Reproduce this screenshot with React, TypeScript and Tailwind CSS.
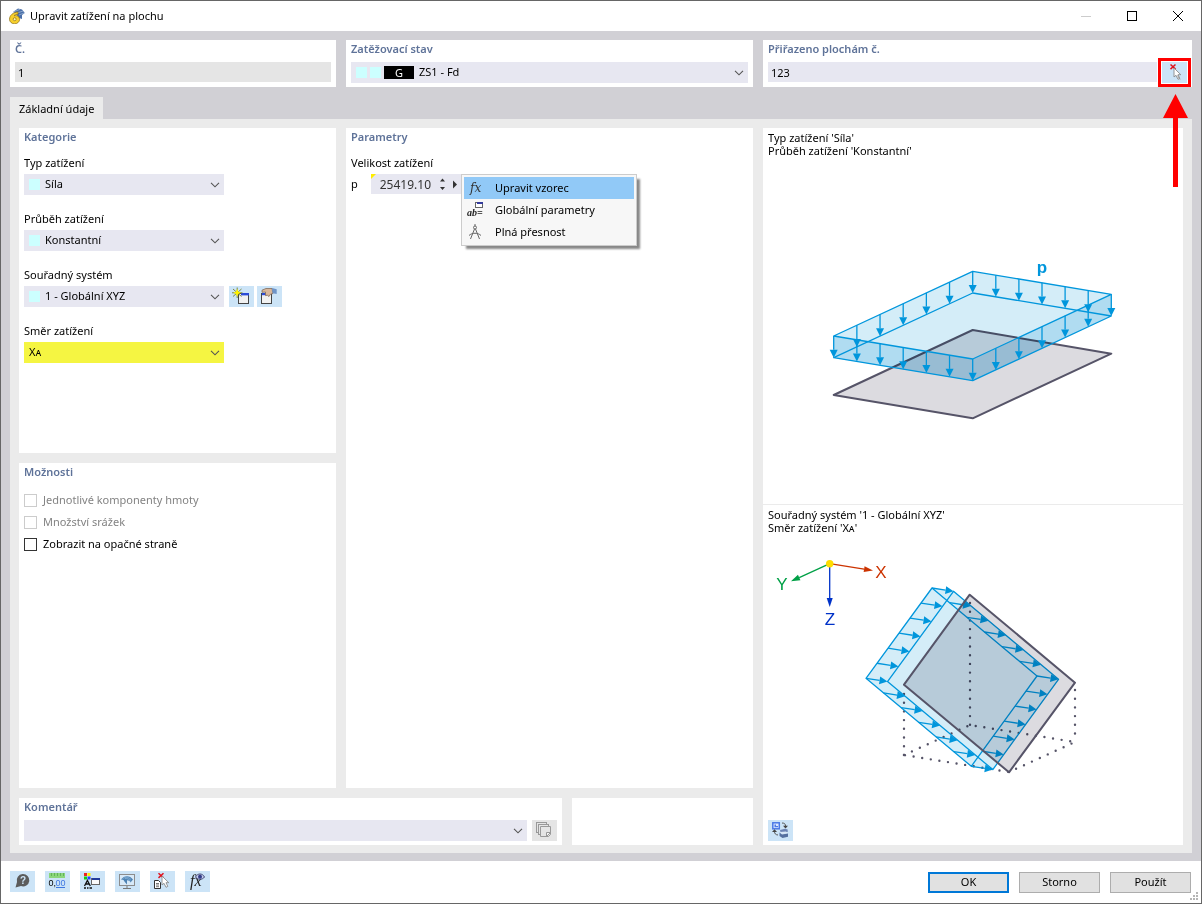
import type { ReactNode, SelectHTMLAttributes } from "react";
import { useId } from "react";
import { clsx } from "clsx";

type Point = [number, number];

const toPoints = (points: Point[]) => points.map((p) => p.join(",")).join(" ");

const lerp = (a: Point, b: Point, t: number): Point => [a[0] + (b[0] - a[0]) * t, a[1] + (b[1] - a[1]) * t];

const shift = (p: Point, d: Point): Point => [p[0] + d[0], p[1] + d[1]];

interface ArrowProps {
    from: Point;
    to: Point;
    color?: string;
    head?: number;
    spread?: number;
}

const Arrow = ({ from, to, color = "#0096dc", head = 8, spread = 4 }: ArrowProps) => {
    const length = Math.hypot(to[0] - from[0], to[1] - from[1]);
    const ux = (to[0] - from[0]) / length;
    const uy = (to[1] - from[1]) / length;
    const base: Point = [to[0] - ux * head, to[1] - uy * head];

    return (
        <g stroke={color} fill={color}>
            <line x1={from[0]} y1={from[1]} x2={base[0]} y2={base[1]} strokeWidth="1.3" />
            <polygon
                stroke="none"
                points={toPoints([to, [base[0] - uy * spread, base[1] + ux * spread], [base[0] + uy * spread, base[1] - ux * spread]])}
            />
        </g>
    );
};

/* Load arrows spread evenly along every edge of a quad */
const EdgeArrows = ({ corners, offset }: { corners: Point[]; offset: Point }) => (
    <>
        {corners.flatMap((corner, i) =>
            [0, 1, 2, 3, 4, 5].map((step) => {
                const from = lerp(corner, corners[(i + 1) % corners.length], step / 6);
                return <Arrow key={`${i}-${step}`} from={from} to={shift(from, offset)} />;
            }),
        )}
    </>
);

const ForceDiagram = () => {
    const top: Point[] = [[209.7, 113.3], [348.3, 136.3], [209.7, 201], [70.7, 178]];
    const drop: Point = [0, 21.7];
    const [a, b, c, d] = top;
    const [a2, b2, c2, d2] = top.map((p) => shift(p, drop));

    return (
        <svg viewBox="0 0 420 346" className="block w-full" role="img" aria-label="Konstantní zatížení plochy">
            <polygon points="209.7,172 348.3,195.7 209.7,260.3 70.7,237" fill="#dcdbe0" stroke="#565468" strokeWidth="2" strokeLinejoin="round" />
            <g fill="#d4edf8" className="mix-blend-multiply">
                <polygon points={toPoints([a, b, b2, c2, d2, d])} />
            </g>
            <g fill="#d4edf8" className="mix-blend-multiply">
                <polygon points={toPoints([d, c, b, b2, c2, d2])} />
            </g>
            <g fill="none" stroke="#0096dc" strokeWidth="1.3" strokeLinejoin="round">
                <polygon points={toPoints(top)} />
                <polygon points={toPoints([a2, b2, c2, d2])} />
            </g>
            <EdgeArrows corners={top} offset={drop} />
            <text x="279" y="115" textAnchor="middle" className="fill-[#0096dc] font-['Liberation_Sans',sans-serif] text-[17px] font-bold">
                p
            </text>
        </svg>
    );
};

const DirectionDiagram = () => {
    const outer: Point[] = [[169, 53], [274, 141], [208.3, 231.3], [103, 143.3]];
    const push: Point = [21.5, 3.3];
    const inner = outer.map((p) => shift(p, push));
    const origin: Point = [66.7, 28.7];

    return (
        <svg viewBox="0 0 420 285" className="block w-full" role="img" aria-label="Směr zatížení v globálních osách">
            <g fill="none" stroke="#565468" strokeWidth="2.4" strokeLinecap="round" strokeDasharray="0 8.7">
                <path d="M207 68V190" />
                <path d="M141 159V220" />
                <path d="M312 155V207" />
                <path d="M141 220L207 190L312 207L246 237Z" />
            </g>
            <g className="mix-blend-multiply">
                <polygon fill="#d4edf8" points={toPoints([outer[0], inner[0], inner[1], inner[2], outer[2], outer[3]])} />
            </g>
            <g fill="none" stroke="#0096dc" strokeWidth="1.3" strokeLinejoin="round">
                <polygon points={toPoints(outer)} />
                <polygon points={toPoints(inner)} />
            </g>
            <EdgeArrows corners={outer} offset={push} />
            <g className="mix-blend-multiply">
                <polygon points="206.7,59.7 312,147.7 246,237.3 141,149.7" fill="#dcdbe0" />
            </g>
            <polygon points="206.7,59.7 312,147.7 246,237.3 141,149.7" fill="none" stroke="#565468" strokeWidth="2" strokeLinejoin="round" />
            <Arrow from={origin} to={[110, 35.5]} color="#cc3300" head={9} spread={3} />
            <Arrow from={origin} to={[28, 46.3]} color="#00a046" head={9} spread={3} />
            <Arrow from={origin} to={[66.7, 72]} color="#0032c8" head={9} spread={3} />
            <circle cx={origin[0]} cy={origin[1]} r="3.7" fill="#fd0" />
            <g textAnchor="middle" className="font-['Liberation_Sans',sans-serif] text-[17px]">
                <text x="118" y="43" fill="#cc3300">X</text>
                <text x="19" y="55" fill="#00a046">Y</text>
                <text x="67" y="90" fill="#0032c8">Z</text>
            </g>
        </svg>
    );
};

const Icon = ({ children }: { children: ReactNode }) => (
    <svg viewBox="0 0 25 21" className="block h-[21px] w-[25px]" aria-hidden="true">
        {children}
    </svg>
);

const Cursor = ({ x, y }: { x: number; y: number }) => (
    <path
        transform={`translate(${x} ${y})`}
        d="M0 0V9L2 7.3L4 11.3L5.8 10.4L4 6.7H6.8Z"
        fill="#fff"
        stroke="#8a8a8a"
        strokeWidth="0.9"
    />
);

const RedCross = ({ x, y }: { x: number; y: number }) => (
    <path transform={`translate(${x} ${y})`} d="M0 0L5 4.6M5 0L0 4.6" stroke="#e0141e" strokeWidth="1.5" />
);

const PickIcon = () => (
    <Icon>
        <RedCross x={8.5} y={2.5} />
        <Cursor x={12} y={6} />
        <path d="M15.5 13.5L18 17.5" stroke="#9a9a9a" />
    </Icon>
);

const NewIcon = () => (
    <Icon>
        <rect x="9.5" y="7.5" width="10" height="10" fill="#f1f1f1" stroke="#444" />
        <rect x="12" y="7" width="8" height="2.4" fill="#2b4bd8" />
        <path d="M4 3L12.5 10.5M12.5 3L4 10.5M8.2 1.5V12M3 6.8H13.5" stroke="#6f7d33" strokeWidth="0.9" />
        <path d="M8.2 2.8L9.3 5.5L12 6.8L9.3 8L8.2 10.8L7 8L4.4 6.8L7 5.5Z" fill="#fff200" />
    </Icon>
);

const EditIcon = () => (
    <Icon>
        <rect x="4.5" y="7.5" width="10" height="10" fill="#f1f1f1" stroke="#444" />
        <rect x="5" y="7" width="5" height="2.2" fill="#2b4bd8" />
        <path d="M5 4.2L9 2.5H15L16 7.5L13.5 8.2L12 10.5L10.3 9.2L8.5 9.6L8.5 6L5 6.3Z" fill="#d9b79a" stroke="#826b5a" strokeWidth="0.8" />
        <path d="M15 2L19.7 3.2V8L15.6 7.2Z" fill="#6d93c7" />
    </Icon>
);

const CopyIcon = () => (
    <Icon>
        <g fill="#e5e5e5" stroke="#999">
            <rect x="4.5" y="2.5" width="10" height="10" />
            <rect x="6.5" y="4.5" width="10" height="10" />
            <path d="M8.5 6.5H18.5V14.5L16.5 16.5H8.5Z" />
            <path d="M14.5 16V12.5H18.5L15 16Z" fill="#f7f7f7" />
        </g>
    </Icon>
);

const SwitchViewIcon = () => (
    <Icon>
        <rect x="4.8" y="2.8" width="6.5" height="6" fill="#dbe8ff" stroke="#4b7ae6" strokeWidth="1.5" />
        <path d="M6.5 4.5V7.3H10V6H8V4.5Z" fill="#4b7ae6" />
        <path d="M14 3C16.5 3 17.5 4 17.5 6" fill="none" stroke="#555" />
        <path d="M15 5.8H20L17.5 8.5Z" fill="#444" />
        <path d="M10 15C7.5 14.8 6.5 13.5 6.5 11.5" fill="none" stroke="#555" />
        <path d="M4 12H9L6.5 9.3Z" fill="#444" />
        <path d="M12 10L17 8.7L19.7 9.5V12H12.5Z" fill="#6d84b5" />
        <path d="M11.5 12.5V16L14.5 18L20 16.7V13.5L14 14.5Z" fill="#56709f" />
        <path d="M12 12L18 11.5L19.7 13L14 14Z" fill="#d9e6f5" />
    </Icon>
);

const HelpIcon = () => (
    <Icon>
        <path d="M5.5 16.5L7 11A6.3 6.2 0 1 1 11 15.1Z" fill="#5c5c5c" />
        <text x="13" y="13" textAnchor="middle" className="fill-[#cce4f7] font-['Liberation_Sans',sans-serif] text-[10px] font-bold">
            ?
        </text>
    </Icon>
);

const UnitsIcon = () => (
    <Icon>
        <rect x="4" y="2" width="16" height="5" fill="#8bd67c" />
        <path d="M6.5 2V5M9.5 2V5M12.5 2V5M15.5 2V5M18.5 2V5" stroke="#58a950" strokeWidth="0.8" />
        <g className="font-['Liberation_Sans',sans-serif] text-[9px]">
            <text x="3.5" y="15" fill="#000">0,</text>
            <text x="10.5" y="15" fill="#3f78e0">00</text>
        </g>
        <path d="M11 16.5H20" stroke="#3f78e0" />
    </Icon>
);

const DisplayIcon = () => (
    <Icon>
        <rect x="4" y="2" width="3" height="3" fill="#e22" />
        <rect x="7.5" y="2" width="3" height="3" fill="#fe0" />
        <rect x="4" y="5.5" width="3" height="3" fill="#1c1" />
        <rect x="7.5" y="5.5" width="3" height="3" fill="#24f" />
        <path d="M4.5 15L7.4 9.5L10.3 15M5.5 13H9.3M4 17H6M7 17H8.5M9.5 17H12" stroke="#111" strokeWidth="1.3" fill="none" />
        <rect x="11.5" y="7.5" width="8" height="6" fill="#fafafa" stroke="#666" />
        <rect x="12" y="7" width="8" height="2" fill="#223a9c" />
    </Icon>
);

const MonitorIcon = () => (
    <Icon>
        <rect x="4.5" y="3.5" width="15" height="11" fill="#d7e9f8" stroke="#8c8c8c" />
        <path d="M12 15V17M8 17.5H16" stroke="#777" />
        <path d="M6 8.5C9 4 15 4 18 8.5L15.5 11.5C15 10 14 9.2 12 9.2V13.5L9.8 11L8.5 9Z" fill="#4e83b4" />
        <path d="M7.5 8C10 5.8 13 5.5 16 8.5M10 7.5C12.5 7 14 8.5 15.5 10" fill="none" stroke="#9cc5e4" strokeWidth="0.6" />
    </Icon>
);

const PickListIcon = () => (
    <Icon>
        <path d="M4.5 9.5H8.5L10.5 11.5V17.5H4.5Z" fill="#fff" stroke="#333" />
        <path d="M6 12.5H9M6 14H9M6 15.7H9" stroke="#555" strokeWidth="0.8" />
        <RedCross x={8.5} y={2.3} />
        <Cursor x={12} y={5} />
    </Icon>
);

const FormulaViewIcon = () => (
    <Icon>
        <text x="5" y="15" className="fill-[#222] font-['Liberation_Serif',serif] text-[16px] italic">
            fx
        </text>
        <path d="M10.5 6C12.5 2 17.5 2 19.5 6C17.5 9 12.5 9 10.5 6Z" fill="#c7cfee" stroke="#333866" strokeWidth="0.9" />
        <circle cx="15" cy="5.7" r="2" fill="#333b88" />
    </Icon>
);

const FormulaIcon = () => (
    <Icon>
        <text x="6" y="14" className="fill-[#333] font-['DejaVu_Serif',serif] text-[12px] italic">
            fx
        </text>
    </Icon>
);

const GlobalParametersIcon = () => (
    <Icon>
        <rect x="11.5" y="2.5" width="7" height="5" fill="#fff" stroke="#666" />
        <rect x="13" y="2" width="6" height="2" fill="#333a9c" />
        <text x="3" y="16" className="fill-[#222] font-['Liberation_Serif',serif] text-[10px] font-bold italic">
            ab=
        </text>
    </Icon>
);

const PrecisionIcon = () => (
    <Icon>
        <g fill="none" stroke="#666">
            <circle cx="11" cy="5.5" r="1.5" />
            <path d="M11 2V4M10.5 7L6.5 17M11.5 7L15.5 17M5 13.5C8 10.5 14 10.5 17 13.5" />
        </g>
    </Icon>
);

const AppIcon = () => (
    <svg viewBox="0 0 16 16" className="size-4" aria-hidden="true">
        <path d="M4 4L9 0.5L13 1.5L15.8 5L13 7V11L10 10L6 5Z" fill="#4a6fa8" />
        <path d="M5 3.6L11 1.4M8 5L14 3M10 7L15 5" stroke="#a6bedc" strokeWidth="0.7" />
        <path d="M9 4C4 4.2 0.5 7.5 0.5 11.3A4.8 4.3 0 0 0 10.6 11.3C10.6 8.4 7.3 7 5 7.8C5.7 6.9 7.2 6.3 9 6.2Z" fill="#f7d02c" stroke="#8a6c12" strokeWidth="0.7" />
        <circle cx="5.7" cy="11.2" r="1.5" fill="#fff3b0" stroke="#8a6c12" strokeWidth="0.7" />
    </svg>
);

const Heading = ({ children }: { children: ReactNode }) => <h2 className="h-[22px] leading-[18px] font-semibold text-[#5f7399]">{children}</h2>;

const Panel = ({ title, className, children }: { title?: ReactNode; className?: string; children?: ReactNode }) => (
    <section className={clsx("bg-white px-[5px] pb-1", className)}>
        {title && <Heading>{title}</Heading>}
        {children}
    </section>
);

const Swatch = () => <span className="size-[11px] bg-[#ccffff]" />;

interface SelectProps extends SelectHTMLAttributes<HTMLSelectElement> {
    option: string;
    prefix?: ReactNode;
    highlighted?: boolean;
    wrapperClassName?: string;
}

const Select = ({ option, prefix, highlighted, wrapperClassName, className, ...props }: SelectProps) => (
    <div className={clsx("relative h-[21px]", wrapperClassName)}>
        <select className={clsx("block size-full appearance-none pr-6 outline-none", highlighted ? "bg-[#f5f542]" : "bg-[#e7e7f1]", className)} {...props}>
            <option>{option}</option>
        </select>
        {prefix && <span className="pointer-events-none absolute inset-y-0 left-[5px] flex items-center gap-[3px]">{prefix}</span>}
        <svg viewBox="0 0 10 6" className="pointer-events-none absolute top-2 right-1 h-[6px] w-[10px]" aria-hidden="true">
            <path d="M1 0.8L5 4.8L9 0.8" fill="none" stroke="#555" strokeWidth="1.1" />
        </svg>
    </div>
);

interface FieldProps {
    label: string;
    option: string;
    swatch?: boolean;
    highlighted?: boolean;
    children?: ReactNode;
}

const Field = ({ label, option, swatch = true, highlighted, children }: FieldProps) => {
    const id = useId();

    return (
        <div>
            <label htmlFor={id} className="mb-0.5 block leading-[18px]">
                {label}
            </label>
            <div className="flex">
                <Select
                    id={id}
                    option={option}
                    highlighted={highlighted}
                    prefix={swatch && <Swatch />}
                    wrapperClassName="w-[200px]"
                    className={swatch ? "pl-[21px]" : "pl-[5px]"}
                />
                {children}
            </div>
        </div>
    );
};

const IconButton = ({ label, disabled, className, children }: { label: string; disabled?: boolean; className?: string; children: ReactNode }) => (
    <button type="button" aria-label={label} disabled={disabled} className={clsx("shrink-0", disabled ? "bg-[#e5e5e5]" : "bg-[#cce4f7]", className)}>
        {children}
    </button>
);

const CheckOption = ({ label, disabled }: { label: string; disabled?: boolean }) => (
    <label className={clsx("flex h-[22px] items-center gap-1.5", disabled && "text-[#838383]")}>
        <input type="checkbox" disabled={disabled} className={clsx("size-[13px] appearance-none border bg-white", disabled ? "border-[#ccc]" : "border-[#333]")} />
        {label}
    </label>
);

const MenuItem = ({ icon, active, children }: { icon: ReactNode; active?: boolean; children: ReactNode }) => (
    <button type="button" role="menuitem" className={clsx("flex h-[22px] w-full items-center gap-1.5 text-left", active && "bg-[#91c9f7]")}>
        {icon}
        {children}
    </button>
);

const DialogButton = ({ primary, children }: { primary?: boolean; children: ReactNode }) => (
    <button type="button" className={clsx("h-[21px] w-[81px] bg-[#e1e1e1]", primary ? "border-2 border-[#0078d7]" : "border border-[#adadad]")}>
        {children}
    </button>
);

const tools = [
    { label: "Nápověda", icon: <HelpIcon /> },
    { label: "Jednotky", icon: <UnitsIcon /> },
    { label: "Zobrazení", icon: <DisplayIcon /> },
    { label: "Náhled", icon: <MonitorIcon /> },
    { label: "Vybrat", icon: <PickListIcon /> },
    { label: "Vzorce", icon: <FormulaViewIcon /> },
];

const TitleBar = () => (
    <header className="flex h-[30px] items-center bg-white pl-2">
        <AppIcon />
        <h1 className="ml-[5px] flex-1">Upravit zatížení na plochu</h1>
        <div className="flex *:flex *:h-[30px] *:w-[46px] *:items-center *:justify-center">
            <button type="button" aria-label="Minimalizovat" disabled>
                <span className="h-px w-[10px] bg-[#ccc]" />
            </button>
            <button type="button" aria-label="Maximalizovat">
                <span className="size-[10px] border border-black" />
            </button>
            <button type="button" aria-label="Zavřít">
                <svg viewBox="0 0 10 10" className="size-[10px]" stroke="#000">
                    <path d="M0 0L10 10M10 0L0 10" />
                </svg>
            </button>
        </div>
    </header>
);

const Summary = () => (
    <div className="grid grid-cols-[326fr_407fr_429fr] gap-[10px]">
        <Panel title={<label htmlFor="number">Č.</label>}>
            <input id="number" readOnly defaultValue="1" className="block h-5 w-full bg-[#e5e5e5] pl-[3px] outline-none" />
        </Panel>
        <Panel title={<label htmlFor="load-case">Zatěžovací stav</label>}>
            <Select
                id="load-case"
                option="ZS1 - Fd"
                className="pl-[68px]"
                prefix={
                    <>
                        <Swatch />
                        <Swatch />
                        <span className="h-[13px] w-[30px] bg-black text-center leading-[13px] text-white">G</span>
                    </>
                }
            />
        </Panel>
        <Panel title={<label htmlFor="surfaces">Přiřazeno plochám č.</label>}>
            <div className="flex items-start gap-[5px]">
                <input id="surfaces" defaultValue="123" className="h-5 min-w-0 flex-1 bg-[#e7e7f1] pl-[3px] outline-none" />
                <div className="relative">
                    <IconButton label="Vybrat plochy" className="block">
                        <PickIcon />
                    </IconButton>
                    {/* Callout frame and arrow over the pick button */}
                    <span className="pointer-events-none absolute -inset-1 border-[3px] border-[#f00]" />
                    <svg viewBox="0 0 25 93" className="pointer-events-none absolute top-8 left-px z-10 h-[93px] w-[25px]" aria-hidden="true">
                        <path d="M12.5 0L25 24H15V93H10V24H0Z" fill="#f00" />
                    </svg>
                </div>
            </div>
        </Panel>
    </div>
);

const LoadValue = () => (
    <div className="pt-1">
        <label htmlFor="load-value" className="mb-0.5 block leading-[18px]">
            Velikost zatížení
        </label>
        <div className="flex items-center">
            <span className="w-5">p</span>
            <div className="relative flex h-5 w-[90px] items-center bg-[#e7e7f1]">
                <span className="absolute top-0 left-0 border-t-[5px] border-r-[5px] border-t-[#ffee00] border-r-transparent" />
                <input id="load-value" defaultValue="25419.10" className="h-5 w-[60px] bg-transparent text-right text-xs text-[#333] outline-none" />
                <svg viewBox="0 0 30 20" className="h-5 w-[30px]" fill="#333" aria-hidden="true">
                    <path d="M9 7.5L11.5 4.5L14 7.5ZM9 13L11.5 16L14 13ZM22 6.5L26 10.5L22 14.5Z" />
                </svg>
                <div role="menu" className="absolute top-0 left-full z-10 w-[176px] border border-[#ccc] bg-[#f7f7f7] p-0.5 shadow-[4px_4px_2px_-1px_#888]">
                    <MenuItem icon={<FormulaIcon />} active>
                        Upravit vzorec
                    </MenuItem>
                    <MenuItem icon={<GlobalParametersIcon />}>Globální parametry</MenuItem>
                    <MenuItem icon={<PrecisionIcon />}>Plná přesnost</MenuItem>
                </div>
            </div>
        </div>
    </div>
);

const BasicData = () => (
    <div className="grid flex-1 grid-cols-[734fr_420fr] gap-[10px] bg-[#ebebeb] px-[9px] pt-[9px] pb-2">
        <div className="flex flex-col gap-[10px]">
            <div className="grid flex-1 grid-cols-[317fr_407fr] gap-[10px]">
                <div className="grid grid-rows-2 gap-[10px]">
                    <Panel title="Kategorie">
                        <div className="flex flex-col gap-[15px] pt-1">
                            <Field label="Typ zatížení" option="Síla" />
                            <Field label="Průběh zatížení" option="Konstantní" />
                            <Field label="Souřadný systém" option="1 - Globální XYZ">
                                <div className="ml-[5px] flex gap-[3px]">
                                    <IconButton label="Nový souřadný systém">
                                        <NewIcon />
                                    </IconButton>
                                    <IconButton label="Upravit souřadný systém">
                                        <EditIcon />
                                    </IconButton>
                                </div>
                            </Field>
                            <Field label="Směr zatížení" option="Xᴀ" swatch={false} highlighted />
                        </div>
                    </Panel>
                    <Panel title="Možnosti">
                        <div className="pt-1">
                            <CheckOption label="Jednotlivé komponenty hmoty" disabled />
                            <CheckOption label="Množství srážek" disabled />
                            <CheckOption label="Zobrazit na opačné straně" />
                        </div>
                    </Panel>
                </div>
                <Panel title="Parametry">
                    <LoadValue />
                </Panel>
            </div>
            <div className="grid grid-cols-[3fr_1fr] gap-[10px]">
                <Panel title={<label htmlFor="comment">Komentář</label>}>
                    <div className="flex gap-[5px]">
                        <Select id="comment" option="" wrapperClassName="flex-1" />
                        <IconButton label="Kopírovat" disabled>
                            <CopyIcon />
                        </IconButton>
                    </div>
                </Panel>
                <Panel />
            </div>
        </div>
        <div className="flex flex-col bg-white leading-[13px]">
            <div className="border-b border-[#ebebeb] pt-[3px]">
                <p className="px-[5px] pb-px">
                    Typ zatížení 'Síla'
                    <br />
                    Průběh zatížení 'Konstantní'
                </p>
                <ForceDiagram />
            </div>
            <div className="flex flex-1 flex-col pt-[3px] pb-1">
                <p className="px-[5px] pb-px">
                    Souřadný systém '1 - Globální XYZ'
                    <br />
                    Směr zatížení 'Xᴀ'
                </p>
                <DirectionDiagram />
                <IconButton label="Přepnout obrázek" className="mt-auto ml-[5px] self-start">
                    <SwitchViewIcon />
                </IconButton>
            </div>
        </div>
    </div>
);

const Footer = () => (
    <footer className="relative flex h-[42px] items-start justify-between bg-white px-[10px] pt-[10px] pl-[9px]">
        <div className="flex gap-[10px]">
            {tools.map((tool) => (
                <IconButton key={tool.label} label={tool.label}>
                    {tool.icon}
                </IconButton>
            ))}
        </div>
        <div className="flex gap-[10px] pt-px">
            <DialogButton primary>OK</DialogButton>
            <DialogButton>Storno</DialogButton>
            <DialogButton>Použít</DialogButton>
        </div>
        <svg viewBox="0 0 8 8" className="absolute right-[3px] bottom-[3px] size-2" fill="#b5b5b5" aria-hidden="true">
            <path d="M6 0h2v2h-2zM3 3h2v2h-2zM6 3h2v2h-2zM0 6h2v2h-2zM3 6h2v2h-2zM6 6h2v2h-2z" />
        </svg>
    </footer>
);

export default function App() {
    return (
        <div className="flex min-h-screen flex-col border border-[#666] bg-[#d1d0d5] font-['Noto_Sans',sans-serif] text-[11px] text-black">
            <TitleBar />
            <main className="flex flex-1 flex-col px-[9px] pt-[9px] pb-2">
                <Summary />
                <div role="tablist" className="mt-[10px] flex">
                    <button type="button" role="tab" aria-selected="true" className="h-[22px] bg-[#ebebeb] px-[9px] pt-0.5">
                        Základní údaje
                    </button>
                </div>
                <BasicData />
            </main>
            <Footer />
        </div>
    );
}
